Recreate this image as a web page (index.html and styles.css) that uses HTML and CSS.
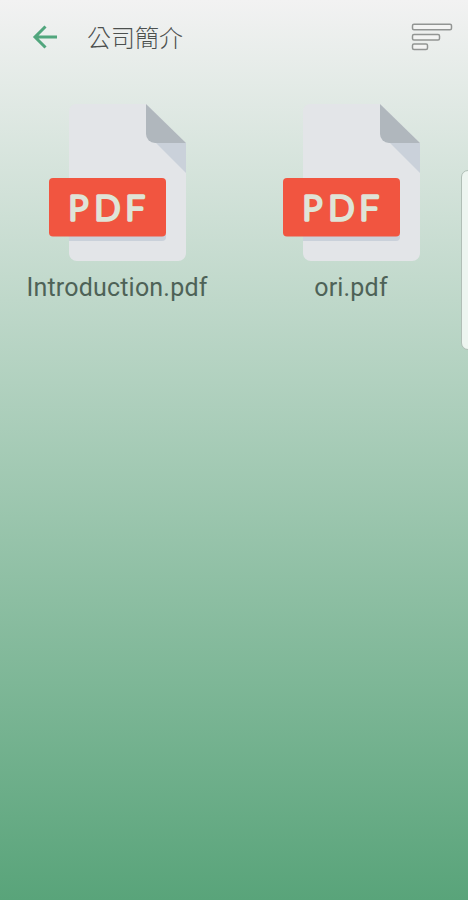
FILE: index.html
```
<!DOCTYPE html>
<html lang="zh-Hant">
<head>
  <meta charset="UTF-8" />
  <meta name="viewport" content="width=device-width, initial-scale=1.0" />
  <title>公司簡介</title>
  <link rel="stylesheet" href="styles.css">
</head>
<body>
  <header class="toolbar">
    <svg class="back" width="26" height="26" viewBox="0 0 26 26">
      <path d="M25 13H3M13.500 2.500L3 13l10.500 10.500" />
    </svg>
    <h1>公司簡介</h1>
    <svg class="sort" width="42" height="28" viewBox="0 0 42 28">
      <rect x="1.500" y="1.200" width="39" height="5.600" rx="1.500" />
      <rect x="1.500" y="11.400" width="27" height="5.600" rx="1.500" />
      <rect x="1.500" y="21" width="15" height="5.600" rx="1.500" />
    </svg>
  </header>

  <main class="files">
    <div class="file">
      <svg class="pdf-icon" width="138" height="158" viewBox="0 0 138 158">
        <path class="paper" d="M28 0H98L138 39V149a8 8 0 0 1-8 8H29a8 8 0 0 1-8-8V7a7 7 0 0 1 7-7z" />
        <path class="fold-shadow" d="M108 39H138V69z" />
        <path class="fold" d="M98 0L138 39H107a9 9 0 0 1-9-9z" />
        <path class="label-shadow" d="M21 130H118v3a4 4 0 0 1-4 4H21z" />
        <rect class="label" x="1" y="74" width="117" height="58.500" rx="4" />
        <text class="label-text" x="20.500 46.500 77.500" y="116">PDF</text>
      </svg>
      <div class="name">Introduction.pdf</div>
    </div>
    <div class="file">
      <svg class="pdf-icon" width="138" height="158" viewBox="0 0 138 158">
        <path class="paper" d="M28 0H98L138 39V149a8 8 0 0 1-8 8H29a8 8 0 0 1-8-8V7a7 7 0 0 1 7-7z" />
        <path class="fold-shadow" d="M108 39H138V69z" />
        <path class="fold" d="M98 0L138 39H107a9 9 0 0 1-9-9z" />
        <path class="label-shadow" d="M21 130H118v3a4 4 0 0 1-4 4H21z" />
        <rect class="label" x="1" y="74" width="117" height="58.500" rx="4" />
        <text class="label-text" x="20.500 46.500 77.500" y="116">PDF</text>
      </svg>
      <div class="name">ori.pdf</div>
    </div>
  </main>

  <div class="edge-handle"></div>
</body>
</html>
```

FILE: styles.css
```
body {
  margin: 0;
  height: 900px;
  overflow: hidden;
  font-family: Roboto, "Noto Sans CJK TC", sans-serif;
  background: linear-gradient(#f2f2f2, #59a47a);
}
.toolbar {
  display: flex;
  align-items: center;
  height: 74px;
  box-sizing: border-box;
  padding: 0 15px 0 32px;
}
.back {
  fill: none;
  stroke: #51a67d;
  stroke-width: 3;
}
h1 {
  margin: 0 0 0 29px;
  padding-top: 4px;
  font-size: 24px;
  font-weight: 300;
  line-height: 36px;
  color: #4c504e;
}
.sort {
  margin-left: auto;
  fill: #f3f4f3;
  stroke: #929593;
  stroke-width: 1.5;
}
.files {
  display: grid;
  grid-template-columns: 1fr 1fr;
  padding-top: 30px;
}
.file {
  display: flex;
  flex-direction: column;
  align-items: center;
}
.pdf-icon {
  display: block;
}
.paper {
  fill: #e3e5e8;
}
.fold {
  fill: #b0b7bd;
}
.fold-shadow {
  fill: #cad1da;
}
.label-shadow {
  fill: #cad1da;
}
.label {
  fill: #f15540;
}
.label-text {
  font-family: Lato, sans-serif;
  font-size: 34px;
  font-weight: 300;
  fill: #dfe4d7;
  stroke: #dfe4d7;
  stroke-width: 3.4;
  stroke-linejoin: round;
}
.name {
  margin-top: 9px;
  font-size: 25px;
  line-height: 34px;
  letter-spacing: 0.2px;
  color: #4e6257;
}
.edge-handle {
  position: absolute;
  top: 170px;
  right: -12px;
  width: 17px;
  height: 178px;
  border: 1px solid #b0beb6;
  border-radius: 7px;
  background: #edf5f0;
}
```
